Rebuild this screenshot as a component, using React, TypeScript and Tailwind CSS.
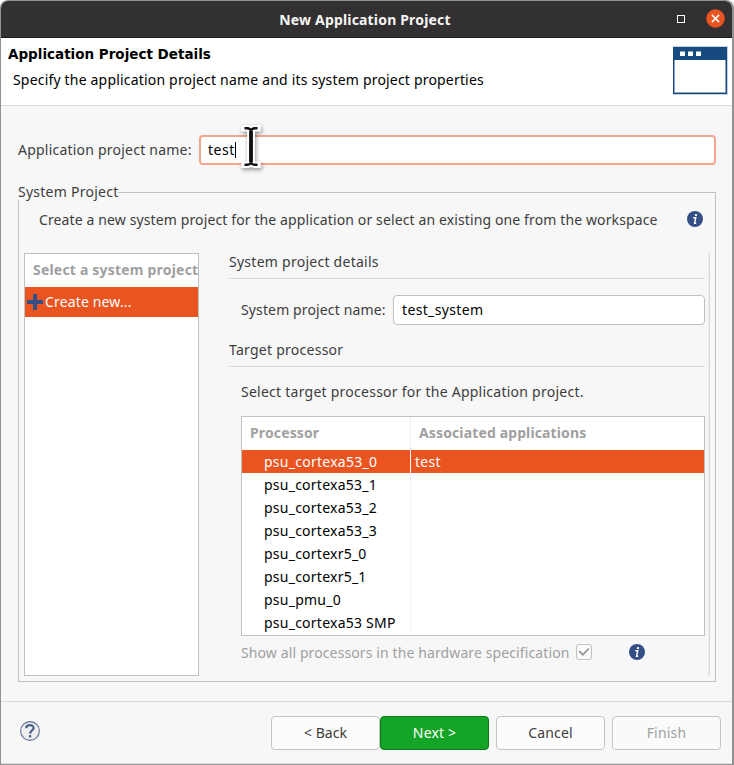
import React from 'react';

const processors = [
  { name: 'psu_cortexa53_0', app: 'test' },
  { name: 'psu_cortexa53_1', app: '' },
  { name: 'psu_cortexa53_2', app: '' },
  { name: 'psu_cortexa53_3', app: '' },
  { name: 'psu_cortexr5_0', app: '' },
  { name: 'psu_cortexr5_1', app: '' },
  { name: 'psu_pmu_0', app: '' },
  { name: 'psu_cortexa53 SMP', app: '' },
];

function InfoIcon() {
  return (
    <svg className="block h-4 w-4 shrink-0" viewBox="0 0 16 16">
      <circle cx="8" cy="8" r="8" fill="#334f86" />
      <circle cx="9" cy="4.1" r="1.2" fill="#fff" />
      <path d="M6.3 6.8h2.4L7.6 12.2h1.6" fill="none" stroke="#fff" strokeWidth="1.5" />
    </svg>
  );
}

function TitleBar() {
  return (
    <div className="relative flex h-[37px] shrink-0 items-center justify-center rounded-t-[7px] border-b border-[#1d1c1c] bg-[#323030] pt-px pr-[3px]">
      <span className="text-[14px] font-bold tracking-[0.17px] text-[#f5f5f5]">New Application Project</span>
      <div className="absolute top-[8px] right-[7px] flex items-center gap-[21px]">
        <span className="h-2 w-2 border border-white" />
        <svg className="h-[19px] w-[19px]" viewBox="0 0 19 19">
          <circle cx="9.5" cy="9.5" r="9.3" fill="#e95420" />
          <path d="M5.9 5.9l7.2 7.2M13.1 5.9l-7.2 7.2" stroke="#fff" strokeWidth="1.5" />
        </svg>
      </div>
    </div>
  );
}

function Header() {
  return (
    <div className="flex h-[68px] shrink-0 justify-between border-b border-[#d9d9d9] bg-white pl-[7px]">
      <div className="flex flex-col text-black">
        <h1 className="mt-[6px] h-5 font-['DejaVu_Sans'] text-[13.5px] leading-5 font-bold">Application Project Details</h1>
        <p className="mt-[6px] pl-[5px] text-[14px] leading-5 tracking-[0.185px]">
          Specify the application project name and its system project properties
        </p>
      </div>
      <svg className="mt-[8px] mr-[4px] h-[49px] w-[55px]" viewBox="0 0 55 49">
        <rect width="55" height="49" fill="#c3d0de" />
        <rect y="1" width="54" height="47" fill="#174a7e" />
        <rect x="1" y="14" width="52" height="33" fill="#8ba4be" />
        <rect x="2" y="14" width="50" height="32" fill="#fff" />
        <path d="M7 5.5h5v4.5h-5zM15 5.5h5v4.5h-5zM23 5.5h5v4.5h-5z" fill="#fff" />
      </svg>
    </div>
  );
}

function SectionHeading({ children }: { children: React.ReactNode }) {
  return <h2 className="h-[27px] border-b border-[#dadada] text-[14px] leading-5 tracking-[0.26px]">{children}</h2>;
}

function TextCursor() {
  return (
    <svg className="absolute top-[-16px] left-[37px] h-[54px] w-[26px] drop-shadow-[1px_2px_2px_rgba(0,0,0,0.4)]" viewBox="0 0 26 54">
      <path d="M6.5 7.3h2.5q4 0 4 3.2v30q0 3.2-4 3.2H6.5M19.5 7.3h-2.5q-4 0-4 3.2v30q0 3.2 4 3.2h2.5" fill="none" stroke="#fff" strokeWidth="6.6" strokeLinecap="square" />
      <path d="M13 9v33" stroke="#fff" strokeWidth="8" />
      <path d="M6.5 7.3h2.5q4 0 4 3.2v30q0 3.2-4 3.2H6.5M19.5 7.3h-2.5q-4 0-4 3.2v30q0 3.2 4 3.2h2.5" fill="none" stroke="#111" strokeWidth="2.4" />
      <path d="M13 10v31" stroke="#111" strokeWidth="3.8" />
    </svg>
  );
}

function ProjectList() {
  return (
    <div className="h-[423px] w-[175px] shrink-0 border border-[#c0c0c0] bg-white">
      <div className="flex h-[33px] items-center pb-[2px] pl-2 text-[14px] font-bold tracking-[0.2px] whitespace-nowrap text-[#a0a0a0]">
        Select a system project
      </div>
      <div className="flex h-[30px] items-center bg-[#e95420] pl-[2px] text-[14px] text-white">
        <svg className="mr-[2px] h-4 w-4" viewBox="0 0 16 16">
          <path d="M0 6h6V0h4v6h6v4h-6v6H6v-6H0z" fill="#334f86" />
        </svg>
        <span className="pb-[2px] tracking-[0.15px]">Create new...</span>
      </div>
    </div>
  );
}

function ProcessorTable() {
  return (
    <div className="ml-3 h-[220px] border border-[#c0c0c0] bg-white text-[14px]">
      <div className="flex h-[33px] pb-px font-bold tracking-[0.13px] text-[#a0a0a0]">
        <div className="mb-[-1px] flex w-[169px] items-center border-r border-[#f0f0f0] pb-[2px] pl-2">Processor</div>
        <div className="flex items-center pb-px pl-2">Associated applications</div>
      </div>
      {processors.map((p, i) => (
        <div key={p.name} className={i === 0 ? 'flex h-[23px] bg-[#e95420] text-white' : 'flex h-[23px] text-black'}>
          <div
            className={
              i === 0
                ? 'flex w-[169px] shrink-0 items-center border-r border-white pl-[22px] tracking-[0.26px]'
                : 'flex w-[169px] shrink-0 items-center border-r border-[#f4f4f4] pl-[22px] tracking-[0.24px]'
            }
          >
            {p.name}
          </div>
          <div className="flex items-center pl-1 tracking-[0.3px]">{p.app}</div>
        </div>
      ))}
    </div>
  );
}

function SystemProject() {
  return (
    <section className="relative mt-[27px] ml-[17px] h-[490px] w-[698px] shrink-0 border border-[#c0c0c0] pl-[5px]">
      <span className="absolute top-[-11px] left-[-1px] h-[18px] bg-[#f7f7f7] text-[14px] leading-5 tracking-[0.25px]">System Project</span>
      <div className="mt-[16px] flex h-5 items-center justify-between pr-[12px] pl-[15px]">
        <span className="text-[14px] tracking-[0.12px]">
          Create a new system project for the application or select an existing one from the workspace
        </span>
        <InfoIcon />
      </div>
      <div className="mt-[24px] flex">
        <ProjectList />
        <div className="mt-[-1px] ml-[30px] flex w-[476px] flex-col">
          <SectionHeading>System project details</SectionHeading>
          <div className="mt-[16px] flex h-[30px] items-center justify-between pl-3">
            <span className="pb-[2px] text-[14px] tracking-[0.13px]">System project name:</span>
            <div className="flex h-[30px] w-[312px] items-center rounded-[4px] border border-[#c0c0c0] bg-white pb-[2px] pl-2 text-[14px] tracking-[0.35px] text-black">
              test_system
            </div>
          </div>
          <div className="mt-[15px]">
            <SectionHeading>Target processor</SectionHeading>
          </div>
          <p className="mt-[15px] mb-[14px] pl-3 text-[14px] leading-5 tracking-[0.25px]">
            Select target processor for the Application project.
          </p>
          <ProcessorTable />
          <div className="mt-[7px] flex h-5 items-center pl-3 text-[14px] text-[#a0a0a0]">
            <span className="w-[335px] pb-[2px] tracking-[0.11px]">Show all processors in the hardware specification</span>
            <span className="mb-[2px] flex h-4 w-4 items-center justify-center rounded-[3px] border border-[#c0c0c0] bg-[#fafafa]">
              <svg className="h-3 w-3" viewBox="0 0 12 12">
                <path d="M1.2 5.2l3.6 3.6 6-6.3" fill="none" stroke="#929292" strokeWidth="1.8" />
              </svg>
            </span>
            <span className="mb-[2px] ml-[37px]">
              <InfoIcon />
            </span>
          </div>
        </div>
        <div className="ml-[3px] h-[423px] w-[2px] border-r border-[#d9d9d9] bg-[#ececec]" />
      </div>
    </section>
  );
}

function Footer() {
  return (
    <footer className="mt-[19px] flex grow items-start justify-between border-t border-[#d9d9d9] pt-[14px] pr-[11px] pl-[19px] text-[14px]">
      <svg className="mt-[5px] h-5 w-5" viewBox="0 0 20 20">
        <circle cx="10" cy="10" r="9.4" fill="#f0f0f0" stroke="#5d7197" strokeWidth="1.1" />
        <path d="M6.2 7.2C6.4 2.9 13.8 3.2 13.6 7.1 13.5 9.5 10.2 9.4 10.1 12.6" fill="none" stroke="#4c6088" strokeWidth="2.2" />
        <rect x="8.8" y="14" width="2.6" height="2.4" rx="1" fill="#4c6088" />
      </svg>
      <div className="flex">
        <button className="h-[34px] w-[109px] rounded-[4px] border border-[#c4c4c4] bg-[#fcfcfc] pb-[2px]">&lt; Back</button>
        <button className="h-[34px] w-[109px] rounded-[4px] border border-[#0c7a1b] bg-[#13a327] pb-[2px] tracking-[0.15px] text-white">Next &gt;</button>
        <button className="ml-[7px] h-[34px] w-[109px] rounded-[4px] border border-[#c4c4c4] bg-[#fcfcfc] pb-[2px] tracking-[0.15px]">Cancel</button>
        <button className="ml-[7px] h-[34px] w-[109px] rounded-[4px] border border-[#c4c4c4] bg-[#fafafa] pb-[2px] tracking-[0.2px] text-[#a0a0a0]">Finish</button>
      </div>
    </footer>
  );
}

export default function App() {
  return (
    <div className="h-[765px] w-[734px] overflow-hidden rounded-t-[8px] bg-[#929292] pt-px pr-[2px] pb-px pl-px font-['Noto_Sans',sans-serif] text-[#3d3d3d]">
      <div className="flex h-full flex-col rounded-t-[7px] border-b border-[#dcdcdc] bg-[#f7f7f7]">
        <TitleBar />
        <Header />
        <div className="mt-[29px] flex h-[30px] shrink-0 items-center pl-[17px]">
          <span className="w-[181px] pb-[2px] text-[14px] tracking-[0.22px]">Application project name:</span>
          <div className="relative flex h-[30px] w-[517px] items-center rounded-[4px] border-2 border-[#f4a58c] bg-white pl-[7px] text-[14px] text-black">
            <span className="pb-[2px] tracking-[0.5px]">test</span>
            <span className="h-4 w-px bg-black" />
            <TextCursor />
          </div>
        </div>
        <SystemProject />
        <Footer />
      </div>
    </div>
  );
}
